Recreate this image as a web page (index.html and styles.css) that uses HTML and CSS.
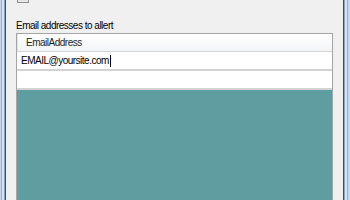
FILE: index.html
```html
<!DOCTYPE html>
<html lang="en">
<head>
    <meta charset="UTF-8">
    <title>Email alerts</title>
    <link rel="stylesheet" href="styles.css">
</head>
<body>
    <div class="janela">
        <div class="moldura moldura-esq"></div>
        <main class="cliente">
            <div class="opcao">
                <span class="caixa"></span>
                <span class="opcao-texto">Application error alerts sent by email to the support group</span>
            </div>
            <p class="rotulo">Email addresses to allert</p>
            <div class="grade">
                <div class="grade-cabecalho">
                    <div class="coluna">EmailAddress</div>
                </div>
                <div class="linha">
                    <span class="celula">EMAIL@yoursite.com</span><span class="cursor"></span>
                </div>
                <div class="linha nova"></div>
                <div class="grade-fundo"></div>
            </div>
        </main>
        <div class="moldura moldura-dir"></div>
    </div>
</body>
</html>
```

FILE: styles.css
```css
* {
    box-sizing: border-box;
    font-family: 'Liberation Sans', Arial, sans-serif;
}
body {
    margin: 0;
    width: 350px;
    height: 200px;
    overflow: hidden;
    background: #f0f0f0;
}
.janela {
    display: flex;
    height: 200px;
}
.moldura {
    width: 7px;
    flex: none;
}
.moldura-esq {
    width: 6px;
    background: linear-gradient(to right, #c4d6ec 0, #c4d6ec 1px, #97b0d3 1px, #97b0d3 2px, #d2e1f3 2px, #d2e1f3 4px, #8aa2c4 4px, #8aa2c4 5px, #3c4c66 5px);
}
.moldura-dir {
    background: linear-gradient(to right, #3c4c66 0, #3c4c66 1px, #8aa2c4 1px, #8aa2c4 2px, #d2e1f3 2px, #d2e1f3 4px, #97b0d3 4px, #97b0d3 5px, #c4d6ec 5px);
}
.cliente {
    flex: 1;
    display: flex;
    flex-direction: column;
    padding: 0 10px;
    background: #f0f0f0;
    overflow: hidden;
}
.opcao {
    display: flex;
    align-items: flex-start;
    gap: 6px;
    margin-top: -10px;
    height: 13px;
    padding-left: 1px;
}
.caixa {
    width: 12px;
    height: 13px;
    border: 1px solid #8e8f8f;
    background: linear-gradient(#f4f4f4, #e4e4e4);
    flex: none;
}
.opcao-texto {
    font-size: 10px;
    letter-spacing: -0.5px;
    line-height: 10px;
    color: #000;
    white-space: nowrap;
}
.rotulo {
    margin: 16px 0 0 0;
    font-size: 10px;
    letter-spacing: -0.5px;
    line-height: 13px;
    height: 13px;
    color: #000;
}
.grade {
    margin-top: 1px;
    border: 1px solid #a5a5a5;
    border-bottom: none;
    flex: 1;
    display: flex;
    flex-direction: column;
    background: #5f9ea0;
}
.grade-cabecalho {
    height: 18px;
    flex: none;
    display: flex;
    background: linear-gradient(#ffffff, #f3f4f6);
    border-bottom: 1px solid #d5d5d5;
}
.coluna {
    flex: 1;
    padding-left: 8px;
    font-size: 10px;
    letter-spacing: -0.5px;
    line-height: 17px;
    color: #1e1e1e;
    border-left: 1px solid #e2e3e5;
}
.linha {
    height: 19px;
    flex: none;
    display: flex;
    align-items: center;
    background: #fff;
    border-bottom: 2px solid #d2d2d2;
    padding-left: 4px;
}
.celula {
    font-size: 10px;
    letter-spacing: -0.5px;
    color: #000;
}
.cursor {
    width: 1px;
    height: 12px;
    margin-left: 1px;
    background: #000;
}
.grade-fundo {
    flex: 1;
    background: #5f9ea0;
}
```
